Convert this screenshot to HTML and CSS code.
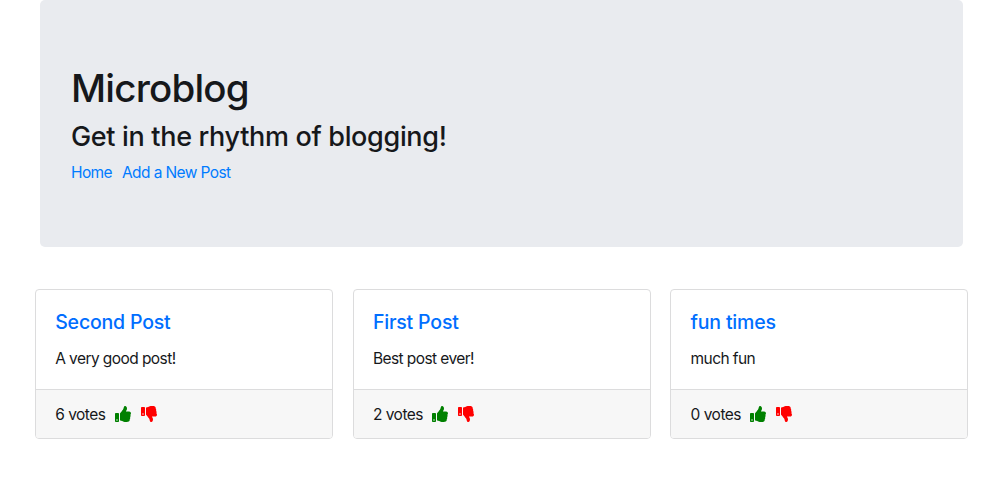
FILE: index.html
```html
<!DOCTYPE html>
<html lang="en">
<head>
<meta charset="utf-8">
<title>Microblog</title>
<link rel="stylesheet" href="styles.css">
</head>
<body>
<svg class="defs" width="0" height="0">
  <symbol id="thumb-up" viewBox="0 0 512 512"><path d="M104 224H24c-13.255 0-24 10.745-24 24v240c0 13.255 10.745 24 24 24h80c13.255 0 24-10.745 24-24V248c0-13.255-10.745-24-24-24zM64 472c-13.255 0-24-10.745-24-24s10.745-24 24-24 24 10.745 24 24-10.745 24-24 24zM384 81.452c0 42.416-25.97 66.208-33.277 94.548h101.723c33.397 0 59.397 27.746 59.553 58.098.084 17.938-7.546 37.249-19.439 49.197l-.11.11c9.836 23.337 8.237 56.037-9.308 79.469 8.681 25.895-.069 57.704-16.382 74.757 4.298 17.598 2.244 32.575-6.148 44.632C440.202 511.587 389.616 512 346.839 512l-2.845-.001c-48.287-.017-87.806-17.598-119.56-31.725-15.957-7.099-36.821-15.887-52.651-16.178-6.54-.12-11.783-5.457-11.783-11.998v-213.77c0-3.2 1.282-6.271 3.558-8.521 39.614-39.144 56.648-80.587 89.117-113.111 14.804-14.832 20.188-37.236 25.393-58.902C282.515 39.293 291.817 0 312 0c24 0 72 8 72 81.452z"/></symbol>
  <symbol id="thumb-down" viewBox="0 0 512 512"><path d="M0 56v240c0 13.255 10.745 24 24 24h80c13.255 0 24-10.745 24-24V56c0-13.255-10.745-24-24-24H24C10.745 32 0 42.745 0 56zm40 200c0-13.255 10.745-24 24-24s24 10.745 24 24-10.745 24-24 24-24-10.745-24-24zm272 256c-20.183 0-29.485-39.293-33.931-57.795-5.206-21.666-10.589-44.07-25.393-58.902-32.469-32.524-49.503-73.967-89.117-113.111a11.98 11.98 0 0 1-3.558-8.521V59.901c0-6.541 5.243-11.878 11.783-11.998 15.831-.29 36.694-9.079 52.651-16.178C256.189 17.598 295.709.017 343.997 0h2.844c42.777 0 93.363.413 113.774 29.737 8.392 12.057 10.446 27.034 6.148 44.632 16.312 17.053 25.063 48.863 16.382 74.757 17.544 23.432 19.143 56.132 9.308 79.469l.11.11c11.893 11.949 19.523 31.259 19.439 49.197-.156 30.352-26.157 58.098-59.553 58.098H350.723C358.03 364.34 384 388.132 384 430.548 384 504 336 512 312 512z"/></symbol>
</svg>
<header class="jumbotron">
  <h1 class="title">Microblog</h1>
  <h2 class="subtitle">Get in the rhythm of blogging!</h2>
  <nav class="nav"><a href="#">Home</a><a href="#">Add a New Post</a></nav>
</header>
<main class="posts">
  <article class="card">
    <div class="card-body"><a class="card-title" href="#">Second Post</a><p class="card-text">A very good post!</p></div>
    <footer class="card-footer"><span class="votes">6 votes</span><svg class="icon up"><use href="#thumb-up"/></svg><svg class="icon down"><use href="#thumb-down"/></svg></footer>
  </article>
  <article class="card">
    <div class="card-body"><a class="card-title" href="#">First Post</a><p class="card-text">Best post ever!</p></div>
    <footer class="card-footer"><span class="votes">2 votes</span><svg class="icon up"><use href="#thumb-up"/></svg><svg class="icon down"><use href="#thumb-down"/></svg></footer>
  </article>
  <article class="card">
    <div class="card-body"><a class="card-title" href="#">fun times</a><p class="card-text">much fun</p></div>
    <footer class="card-footer"><span class="votes">0 votes</span><svg class="icon up"><use href="#thumb-up"/></svg><svg class="icon down"><use href="#thumb-down"/></svg></footer>
  </article>
</main>
</body>
</html>
```
FILE: styles.css
```css
* { box-sizing: border-box; }
body { margin: 0; background: #fff; color: #16181b; font: 15.5px/24px Inter, "Liberation Sans", sans-serif; letter-spacing: -0.57px; overflow: hidden; }
a { color: #007bff; text-decoration: none; }
.defs { display: block; }
.jumbotron { width: 923.7px; height: 247px; margin-left: 39.7px; padding: 64px 31.3px 0; background: #e9ebef; border-radius: 5px; }
.title { margin: 0; font-size: 38.5px; line-height: 48px; font-weight: 450; letter-spacing: -0.8px; }
.subtitle { margin: 9px 0 8px; font-size: 27px; line-height: 32px; font-weight: 500; letter-spacing: -0.33px; }
.nav { display: flex; gap: 10px; letter-spacing: -0.6px; }
.posts { display: grid; grid-template-columns: repeat(3, 298px); gap: 19.7px; margin: 42px 0 0 35px; }
.card { height: 150px; border: 1px solid #dcdcdd; border-radius: 4px; overflow: hidden; }
.card-body { height: 100px; padding: 20px 19.2px; border-bottom: 1px solid #dcdcdd; }
.card-title { display: block; color: #006eff; font-size: 19.5px; font-weight: 500; line-height: 24px; letter-spacing: -0.18px; }
.card-text { margin: 13px 0 0; }
.card-footer { display: flex; align-items: center; height: 48px; padding: 0 19.2px; background: #f7f7f7; }
.votes { margin-right: 9.2px; padding-top: 2px; letter-spacing: -0.5px; }
.icon { width: 16px; height: 16px; margin-right: 10px; }
.up { fill: #008000; }
.down { fill: #f00; }
```
